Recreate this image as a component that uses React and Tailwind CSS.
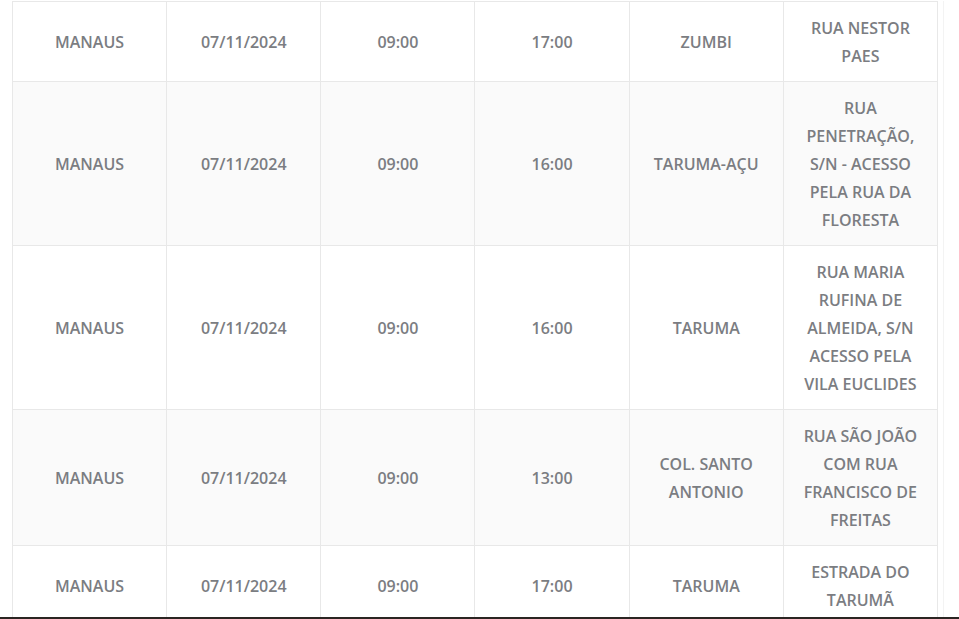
const rows = [
  ["MANAUS", "07/11/2024", "09:00", "17:00", "ZUMBI", "RUA NESTOR PAES"],
  ["MANAUS", "07/11/2024", "09:00", "16:00", "TARUMA-AÇU", "RUA PENETRAÇÃO, S/N - ACESSO PELA RUA DA FLORESTA"],
  ["MANAUS", "07/11/2024", "09:00", "16:00", "TARUMA", "RUA MARIA RUFINA DE ALMEIDA, S/N ACESSO PELA VILA EUCLIDES"],
  ["MANAUS", "07/11/2024", "09:00", "13:00", "COL. SANTO ANTONIO", "RUA SÃO JOÃO COM RUA FRANCISCO DE FREITAS"],
  ["MANAUS", "07/11/2024", "09:00", "17:00", "TARUMA", "ESTRADA DO TARUMÃ"],
];

export default function App() {
  return (
    <div
      className="h-[619px] flex flex-col bg-white overflow-hidden"
      style={{ fontFamily: '"Open Sans", "Liberation Sans", sans-serif' }}
    >
      <div className="flex-1 overflow-hidden flex pt-px">
        <div className="pl-3 w-[939px] shrink-0">
          <table className="w-[926px] table-fixed border-collapse text-[16px] font-semibold leading-7 text-[#7b7d82] text-center uppercase">
            <tbody>
              {rows.map((r, i) => (
                <tr key={i} className={i % 2 === 1 ? "bg-[#fafafa]" : "bg-white"}>
                  {r.map((c, j) => (
                    <td key={j} className="border border-[#e8e8e8] px-[16px] py-[11.5px] align-middle">
                      {c}
                    </td>
                  ))}
                </tr>
              ))}
            </tbody>
          </table>
        </div>
        <div className="ml-[4px] w-px bg-[#f3f3f3]" />
      </div>
      <div className="h-[2px] bg-[#2a2522]" />
    </div>
  );
}
